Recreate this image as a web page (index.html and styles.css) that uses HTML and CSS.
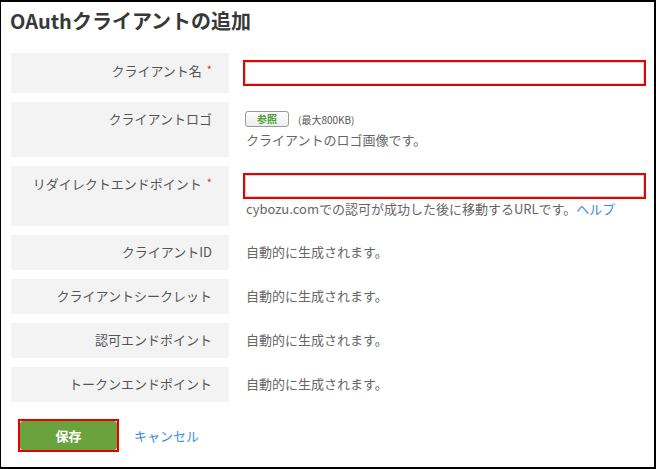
FILE: index.html
```html
<!DOCTYPE html>
<html lang="ja">
<head>
<meta charset="utf-8">
<title>OAuthクライアントの追加</title>
<link rel="stylesheet" href="styles.css">
</head>
<body>
<div class="frame">
  <h1 class="title">OAuthクライアントの追加</h1>
  <div class="form">
    <div class="row">
      <div class="label">クライアント名<span class="req">*</span></div>
      <div class="value"><input class="field" type="text"></div>
    </div>
    <div class="row">
      <div class="label">クライアントロゴ</div>
      <div class="value">
        <div class="upload"><button class="browse" type="button">参照</button><span class="limit">(最大800KB)</span></div>
        <div class="desc desc-logo">クライアントのロゴ画像です。</div>
      </div>
    </div>
    <div class="row">
      <div class="label">リダイレクトエンドポイント<span class="req">*</span></div>
      <div class="value">
        <input class="field" type="text">
        <div class="desc">cybozu.comでの認可が成功した後に移動するURLです。<a class="link">ヘルプ</a></div>
      </div>
    </div>
    <div class="row">
      <div class="label">クライアントID</div>
      <div class="value plain">自動的に生成されます。</div>
    </div>
    <div class="row">
      <div class="label">クライアントシークレット</div>
      <div class="value plain">自動的に生成されます。</div>
    </div>
    <div class="row">
      <div class="label">認可エンドポイント</div>
      <div class="value plain">自動的に生成されます。</div>
    </div>
    <div class="row">
      <div class="label">トークンエンドポイント</div>
      <div class="value plain">自動的に生成されます。</div>
    </div>
  </div>
  <div class="actions">
    <span class="mark"><button class="save" type="button">保存</button></span>
    <a class="link cancel">キャンセル</a>
  </div>
</div>
</body>
</html>
```

FILE: styles.css
```css
html, body {
  margin: 0;
  padding: 0;
  background: #fff;
}

body {
  font-family: "Noto Sans CJK JP", "Noto Sans", sans-serif;
}

.frame {
  box-sizing: border-box;
  width: 656px;
  height: 469px;
  border: 2px solid #000;
  border-left-width: 1px;
  overflow: hidden;
}

.title {
  margin: 0;
  padding: 5px 0 0 9px;
  font-size: 20px;
  line-height: 28px;
  font-weight: bold;
  color: #383838;
}

.form {
  display: flex;
  flex-direction: column;
  gap: 9px;
  margin: 18px 0 0 10px;
}

.row {
  display: flex;
}

.label {
  box-sizing: border-box;
  width: 218px;
  flex: none;
  background: #f3f3f3;
  padding: 9px 17px 11px 0;
  text-align: right;
  font-size: 13px;
  line-height: 15px;
  color: #555;
}

.req {
  color: #e8312a;
  font-size: 11px;
  margin-left: 5px;
  vertical-align: 2px;
}

.value {
  padding: 7px 0 7px 14px;
  font-size: 13px;
  line-height: 15px;
  color: #666;
}

.value.plain {
  padding: 9px 0 11px 17px;
}

.field {
  display: block;
  box-sizing: border-box;
  width: 403px;
  height: 26px;
  margin: 0;
  padding: 0;
  border: 2px solid #e60000;
  box-shadow: inset 0 0 0 1px #d4d4d4, inset 0 -1px 0 #aaa;
  background: #fff;
}

.upload {
  display: flex;
  align-items: center;
  height: 20px;
}

.browse {
  box-sizing: border-box;
  width: 44px;
  height: 16px;
  margin: 0 0 0 2px;
  padding: 0;
  border: 1px solid #999;
  border-radius: 3px;
  background: linear-gradient(#ffffff, #ececec);
  color: #4a9e33;
  font-family: inherit;
  font-size: 10px;
  line-height: 14px;
  font-weight: bold;
}

.limit {
  margin-left: 9px;
  font-size: 10px;
  color: #555;
}

.desc {
  padding-left: 3px;
  line-height: 20px;
}

.desc-logo {
  line-height: 21px;
}

.link {
  color: #3b8ddb;
  text-decoration: none;
}

.actions {
  display: flex;
  align-items: center;
  margin: 17px 0 0 17px;
}

.mark {
  display: inline-block;
  border: 2px solid #e60000;
  line-height: 0;
}

.save {
  width: 97px;
  height: 29px;
  margin: 0;
  padding: 0;
  border: none;
  border-radius: 3px;
  background: #6aa33e;
  color: #fff;
  font-family: inherit;
  font-size: 13px;
  font-weight: bold;
}

.cancel {
  margin-left: 15px;
  font-size: 13px;
}
```
